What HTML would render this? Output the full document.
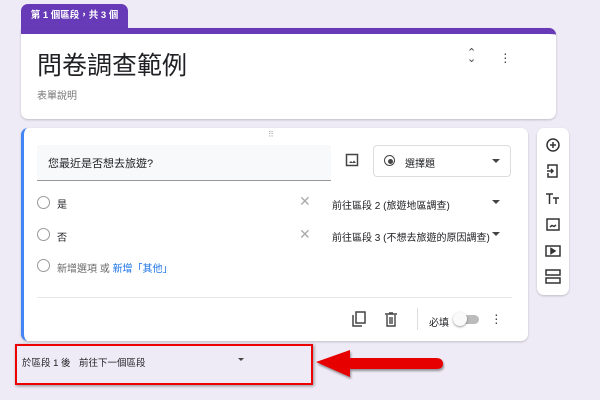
<!DOCTYPE html><html><head><meta charset="utf-8"><style>
body{margin:0;width:600px;height:400px;background:#efebf6;font-family:"Liberation Sans","Noto Sans CJK TC",sans-serif;position:relative;overflow:hidden;color:#202124}
.a{position:absolute}
.card{background:#fff;border-radius:7px;box-shadow:0 1px 2px rgba(0,0,0,.2)}
.rad{width:11px;height:11px;border:1.5px solid #999;border-radius:50%}
.t{font-size:10px}
</style></head><body>
<div class="a" style="left:21px;top:4px;width:107px;height:28px;background:#673ab7;border-radius:7px 7px 0 0;color:#fff;font-size:9.5px;font-weight:bold;line-height:24px;text-align:center">第 1 個區段，共 3 個</div>
<div class="a card" style="left:21px;top:28px;width:535px;height:91px;border-top:6px solid #673ab7;border-radius:0 7px 7px 7px;box-sizing:border-box"></div>
<div class="a" style="left:37px;top:46px;font-size:25px">問卷調查範例</div>
<div class="a" style="left:37px;top:87px;font-size:10px;color:#777">表單說明</div>
<div class="a" style="left:467px;top:50px;font-size:11px;color:#444;line-height:6px">⌃<br>⌄</div>
<div class="a" style="left:503px;top:51px;font-size:14px;color:#444;line-height:4px">·<br>·<br>·</div>
<div class="a card" style="left:21px;top:128px;width:507px;height:213px;border-left:3px solid #4285f4;box-sizing:border-box"></div>
<div class="a" style="left:268px;top:130px;font-size:8px;color:#aaa;letter-spacing:1px">⠿</div>
<div class="a" style="left:37px;top:145px;width:294px;height:35px;background:#f8f9fa;border-bottom:1px solid #999"></div>
<div class="a" style="left:48px;top:155px;font-size:11px">您最近是否想去旅遊?</div>
<svg class="a" style="left:345px;top:153px" width="14" height="14"><rect x="1.5" y="1.5" width="11" height="11" fill="none" stroke="#444" stroke-width="1.5"/><path d="M4 10l2-2 1.5 1.5 1.5-2 2 2.5z" fill="#444"/></svg>
<div class="a" style="left:373px;top:145px;width:138px;height:32px;border:1px solid #ddd;border-radius:4px;box-sizing:border-box"></div>
<div class="a" style="left:384px;top:155px;width:9px;height:9px;border:1.5px solid #444;border-radius:50%"></div>
<div class="a" style="left:387.5px;top:158.5px;width:5px;height:5px;background:#444;border-radius:50%"></div>
<div class="a t" style="left:405px;top:155px">選擇題</div>
<div class="a" style="left:492px;top:159px;border:4px solid transparent;border-top:4px solid #444"></div>
<div class="a rad" style="left:37px;top:196px"></div><div class="a t" style="left:57px;top:196px">是</div>
<div class="a" style="left:299px;top:193px;color:#aaa;font-size:14px">✕</div>
<div class="a t" style="left:332px;top:197px">前往區段 2 (旅遊地區調查)</div>
<div class="a" style="left:492px;top:200px;border:4px solid transparent;border-top:4px solid #444"></div>
<div class="a rad" style="left:37px;top:228px"></div><div class="a t" style="left:57px;top:229px">否</div>
<div class="a" style="left:299px;top:226px;color:#aaa;font-size:14px">✕</div>
<div class="a t" style="left:332px;top:229px">前往區段 3 (不想去旅遊的原因調查)</div>
<div class="a" style="left:492px;top:232px;border:4px solid transparent;border-top:4px solid #444"></div>
<div class="a rad" style="left:37px;top:259px"></div><div class="a t" style="left:57px;top:260px;color:#666">新增選項 或 <span style="color:#1a73e8">新增「其他」</span></div>
<div class="a" style="left:37px;top:297px;width:475px;height:1px;background:#e8e8e8"></div>
<svg class="a" style="left:351px;top:311px" width="16" height="16"><rect x="5" y="1" width="9" height="11" fill="none" stroke="#444" stroke-width="1.5"/><path d="M2 4v11h9" fill="none" stroke="#444" stroke-width="1.5"/></svg>
<svg class="a" style="left:384px;top:311px" width="14" height="16"><path d="M1 3h12M5 2h4M3 4v11h8V4M6 6v7M8 6v7" fill="none" stroke="#444" stroke-width="1.4"/></svg>
<div class="a" style="left:417px;top:308px;width:1px;height:22px;background:#ddd"></div>
<div class="a t" style="left:429px;top:314px">必填</div>
<div class="a" style="left:457px;top:315px;width:22px;height:9px;background:#bbb;border-radius:5px"></div>
<div class="a" style="left:453px;top:312px;width:14px;height:14px;background:#fafafa;border-radius:50%;box-shadow:0 1px 2px rgba(0,0,0,.4)"></div>
<div class="a" style="left:494px;top:312px;font-size:14px;color:#444;line-height:4px">·<br>·<br>·</div>
<div class="a card" style="left:537px;top:128px;width:32px;height:167px"></div>
<svg class="a" style="left:545px;top:137px" width="16" height="150" fill="none" stroke="#333" stroke-width="1.5">
<circle cx="8" cy="8" r="6"/><path d="M8 5v6M5 8h6"/>
<path d="M3 32v-4h9v12H3v-4M2 34h6M6 32l2 2-2 2"/>
<path d="M1 57h7M4.5 57v10M8 61h6M11 61v6" />
<rect x="2" y="82" width="12" height="11"/><path d="M5 90l2-1.5 2 1 2-1.5" />
<rect x="1" y="109" width="14" height="10"/><path d="M6 111.5v5l4-2.5z" fill="#333"/>
<rect x="1" y="133" width="14" height="5"/><rect x="1" y="141" width="14" height="5"/>
</svg>
<div class="a" style="left:22px;top:355px;font-size:9.5px">於區段 1 後</div>
<div class="a" style="left:79px;top:355px;font-size:9.5px">前往下一個區段</div>
<div class="a" style="left:238px;top:358px;border:3.5px solid transparent;border-top:3.5px solid #444"></div>
<div class="a" style="left:15px;top:344px;width:298px;height:41px;border:2px solid #e00;box-sizing:border-box;box-shadow:1px 1px 3px rgba(0,0,0,.4)"></div>
<svg class="a" style="left:310px;top:345px" width="135" height="35"><path d="M6 17L40 5V13H126Q133 13 133 19Q133 24 126 24H40V32Z" fill="#e60000" style="filter:drop-shadow(1px 2px 1px rgba(0,0,0,.4))"/></svg>
</body></html>
